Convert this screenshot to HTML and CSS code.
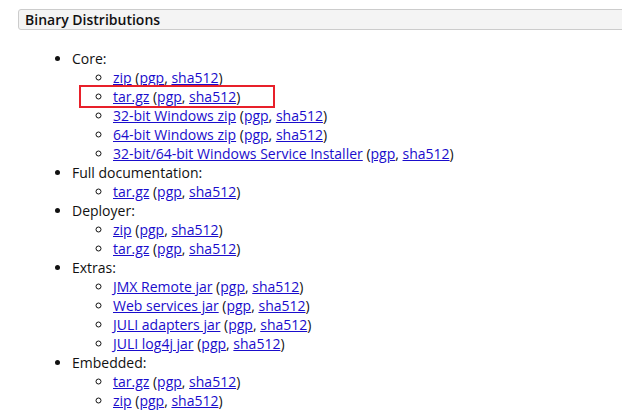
FILE: index.html
```html
<!DOCTYPE html>
<html>
<head>
<meta charset="utf-8">
<link rel="stylesheet" href="styles.css">
</head>
<body>
<div class="page">
  <h3 class="section-title">Binary Distributions</h3>
  <ul class="dist">
    <li>Core:
      <ul class="files">
        <li><a href="#">zip</a> (<a href="#">pgp</a>, <a href="#">sha512</a>)</li>
        <li class="marked"><a href="#">tar.gz</a> (<a href="#">pgp</a>, <a href="#">sha512</a>)</li>
        <li><a href="#">32-bit Windows zip</a> (<a href="#">pgp</a>, <a href="#">sha512</a>)</li>
        <li><a href="#">64-bit Windows zip</a> (<a href="#">pgp</a>, <a href="#">sha512</a>)</li>
        <li><a href="#">32-bit/64-bit Windows Service Installer</a> (<a href="#">pgp</a>, <a href="#">sha512</a>)</li>
      </ul>
    </li>
    <li>Full documentation:
      <ul class="files">
        <li><a href="#">tar.gz</a> (<a href="#">pgp</a>, <a href="#">sha512</a>)</li>
      </ul>
    </li>
    <li>Deployer:
      <ul class="files">
        <li><a href="#">zip</a> (<a href="#">pgp</a>, <a href="#">sha512</a>)</li>
        <li><a href="#">tar.gz</a> (<a href="#">pgp</a>, <a href="#">sha512</a>)</li>
      </ul>
    </li>
    <li>Extras:
      <ul class="files">
        <li><a href="#">JMX Remote jar</a> (<a href="#">pgp</a>, <a href="#">sha512</a>)</li>
        <li><a href="#">Web services jar</a> (<a href="#">pgp</a>, <a href="#">sha512</a>)</li>
        <li><a href="#">JULI adapters jar</a> (<a href="#">pgp</a>, <a href="#">sha512</a>)</li>
        <li><a href="#">JULI log4j jar</a> (<a href="#">pgp</a>, <a href="#">sha512</a>)</li>
      </ul>
    </li>
    <li>Embedded:
      <ul class="files">
        <li><a href="#">tar.gz</a> (<a href="#">pgp</a>, <a href="#">sha512</a>)</li>
        <li><a href="#">zip</a> (<a href="#">pgp</a>, <a href="#">sha512</a>)</li>
      </ul>
    </li>
  </ul>
</div>
</body>
</html>
```

FILE: styles.css
```css
html, body {
  margin: 0;
  padding: 0;
  background: #fff;
  overflow: hidden;
}
body {
  font-family: "Open Sans", "Liberation Sans", sans-serif;
  font-size: 14px;
  line-height: 19px;
  color: #111;
}
.page {
  padding: 9px 0 0 18px;
}
.section-title {
  margin: 0 -20px 0 0;
  font-size: 14px;
  font-weight: 600;
  line-height: 19px;
  color: #111;
  background: #f4f4f4;
  border: 1px solid #cccccc;
  border-radius: 3px;
  padding: 0 6px;
}
.dist {
  margin: 19px 0 0 0;
  padding-left: 54px;
  list-style: disc;
}
.files {
  margin: 0;
  padding-left: 41px;
  list-style: circle;
}
a {
  color: #1a0dcc;
  text-decoration: underline;
}
.marked {
  position: relative;
}
.marked::after {
  content: "";
  position: absolute;
  left: -34px;
  top: -2px;
  width: 192px;
  height: 19px;
  border: 2px solid #e8202a;
}
```
